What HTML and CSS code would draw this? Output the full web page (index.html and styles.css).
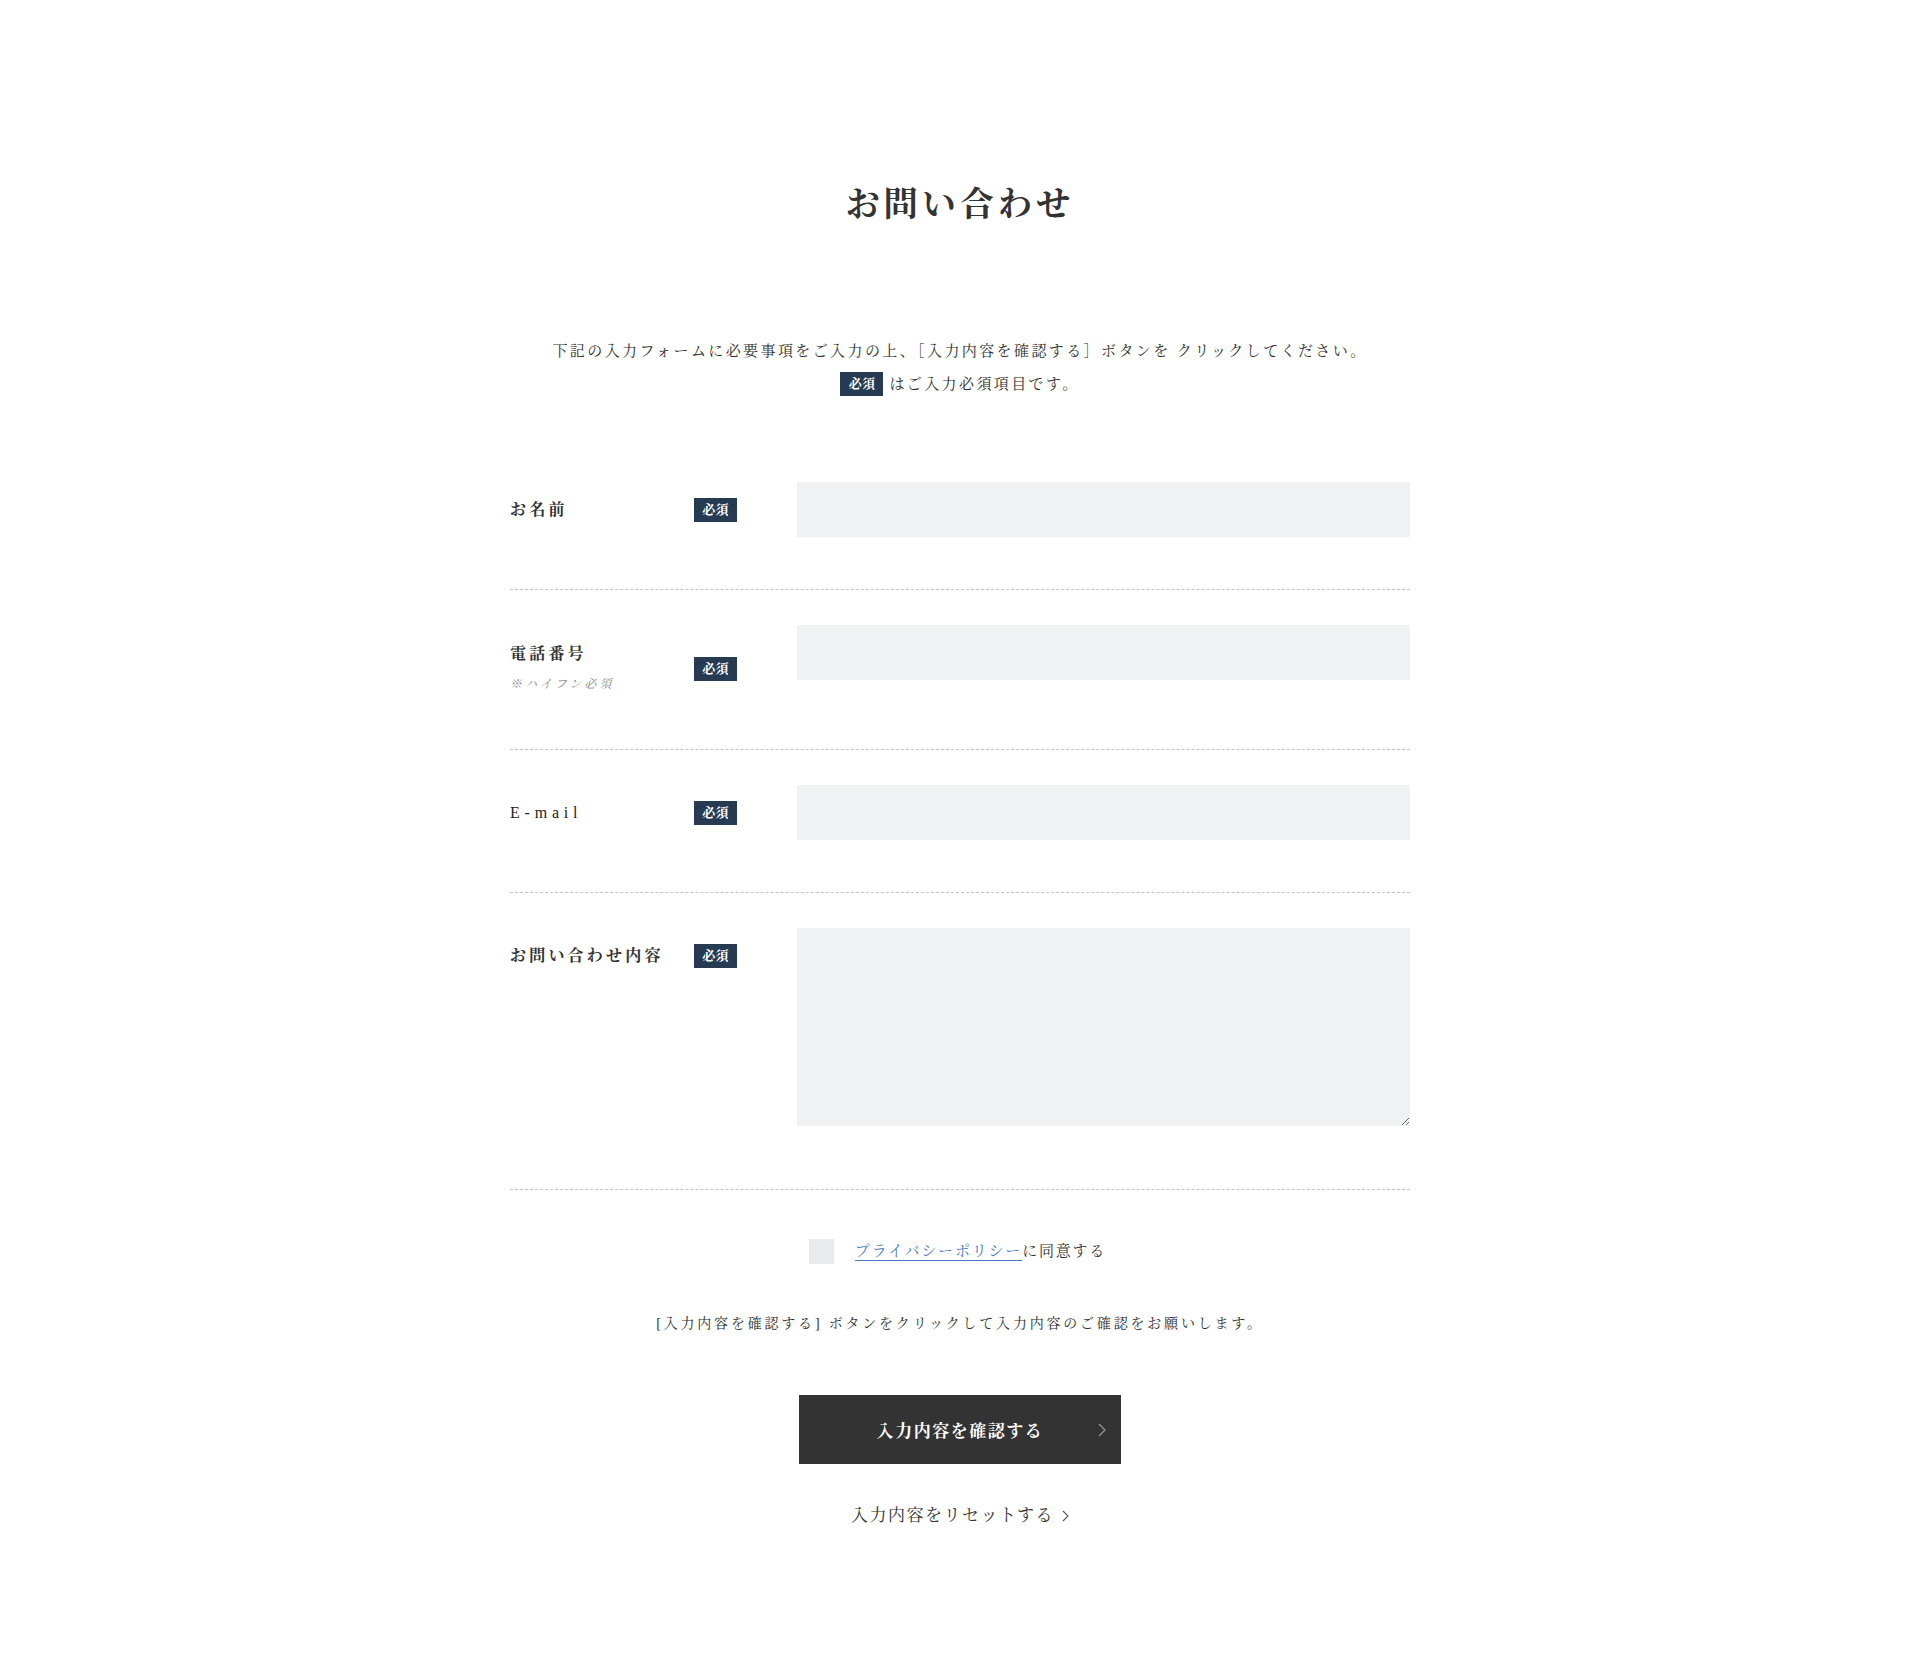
FILE: index.html
```html
<!DOCTYPE html>
<html lang="ja">
<head>
<meta charset="utf-8">
<title>お問い合わせ</title>
<link rel="stylesheet" href="styles.css">
</head>
<body>
<main class="page">
  <h1 class="title">お問い合わせ</h1>
  <p class="intro">下記の入力フォームに必要事項をご入力の上、［入力内容を確認する］ボタンを クリックしてください。<br><span class="badge badge-inline">必須</span>はご入力必須項目です。</p>

  <form class="form">
    <div class="row">
      <div class="label-col">
        <div class="label-block"><div class="label">お名前</div></div>
        <span class="badge">必須</span>
      </div>
      <div class="field"><input class="input" type="text"></div>
    </div>
    <div class="row">
      <div class="label-col label-col-tall">
        <div class="label-block label-block-top">
          <div class="label">電話番号</div>
          <div class="sub">※ハイフン必須</div>
        </div>
        <span class="badge">必須</span>
      </div>
      <div class="field"><input class="input" type="tel"></div>
    </div>
    <div class="row">
      <div class="label-col">
        <div class="label-block"><div class="label label-latin">E-mail</div></div>
        <span class="badge">必須</span>
      </div>
      <div class="field"><input class="input" type="email"></div>
    </div>
    <div class="row">
      <div class="label-col">
        <div class="label-block"><div class="label">お問い合わせ内容</div></div>
        <span class="badge">必須</span>
      </div>
      <div class="field"><textarea class="textarea"></textarea></div>
    </div>
  </form>

  <div class="agree">
    <span class="checkbox"></span>
    <span class="agree-text"><a class="link" href="#">プライバシーポリシー</a>に同意する</span>
  </div>

  <p class="note">[入力内容を確認する] ボタンをクリックして入力内容のご確認をお願いします。</p>

  <button class="submit" type="button">入力内容を確認する<svg class="submit-arrow" width="8" height="14" viewBox="0 0 8 14"><polyline points="1,1 7,7 1,13" fill="none" stroke="#9a9a9a" stroke-width="1.2"/></svg></button>

  <div class="reset-wrap">
    <a class="reset" href="#">入力内容をリセットする<svg class="reset-arrow" width="7" height="12" viewBox="0 0 7 12"><polyline points="1,1 6,6 1,11" fill="none" stroke="#555" stroke-width="1.1"/></svg></a>
  </div>
</main>
</body>
</html>
```

FILE: styles.css
```css
* {
  box-sizing: border-box;
}

html, body {
  margin: 0;
  padding: 0;
  background: #fff;
}

body {
  font-family: "Liberation Serif", "Noto Serif CJK JP", "Noto Sans CJK JP", serif;
  color: #333;
}

.page {
  padding: 180px 0 134px;
}

.title {
  margin: 0;
  text-align: center;
  font-size: 34px;
  line-height: 50px;
  font-weight: bold;
  letter-spacing: 0.12em;
  color: #333;
}

.intro {
  margin: 105px 0 0;
  text-align: center;
  font-size: 15px;
  line-height: 33px;
  letter-spacing: 0.16em;
  color: #2e2e2e;
}

.badge {
  display: inline-block;
  width: 43px;
  height: 24px;
  line-height: 24px;
  background: #263a52;
  color: #fff;
  font-size: 13px;
  font-weight: bold;
  text-align: center;
  letter-spacing: 0.02em;
  flex-shrink: 0;
}

.badge-inline {
  vertical-align: middle;
  margin-right: 6px;
  position: relative;
  top: -2px;
}

.form {
  width: 900px;
  margin: 46px auto 0;
}

.row {
  display: grid;
  grid-template-columns: 227px 613px;
  column-gap: 60px;
  padding: 35px 0 36px;
  border-bottom: 1px dashed #c4c4c4;
}

.label-col {
  display: flex;
  align-items: center;
  justify-content: space-between;
  height: 55px;
}

.label-col-tall {
  height: 88px;
}

.label-block-top {
  align-self: flex-start;
  padding-top: 16px;
}

.label {
  font-size: 16px;
  line-height: 26px;
  font-weight: bold;
  letter-spacing: 0.2em;
  color: #333;
}

.label-latin {
  letter-spacing: 0.3em;
  font-weight: normal;
  color: #222;
}

.sub {
  margin-top: 7px;
  font-size: 12px;
  line-height: 20px;
  font-style: italic;
  letter-spacing: 0.25em;
  color: #8a8a8a;
}

.field {
  display: flex;
  flex-direction: column;
}

.input {
  display: block;
  width: 100%;
  height: 55px;
  margin: 0 0 16px;
  border: none;
  background: #f0f1f3;
  padding: 0 16px;
  font-family: inherit;
  font-size: 15px;
  outline: none;
}

.textarea {
  display: block;
  width: 100%;
  height: 198px;
  margin: 0 0 27px;
  border: none;
  background: #f0f1f3;
  padding: 12px 16px;
  font-family: inherit;
  font-size: 15px;
  resize: vertical;
  outline: none;
}

.agree {
  margin-top: 49px;
  display: flex;
  justify-content: center;
  align-items: center;
  gap: 21px;
  height: 25px;
}

.checkbox {
  display: block;
  width: 25px;
  height: 25px;
  background: #e9eaec;
}

.agree-text {
  font-size: 15px;
  line-height: 25px;
  letter-spacing: 0.12em;
  color: #333;
  margin-right: 5px;
}

.link {
  color: #4a78c4;
  text-decoration: none;
  border-bottom: 1px solid #4a78c4;
  padding-bottom: 1px;
}

.note {
  margin: 48px 0 0;
  text-align: center;
  font-size: 14px;
  line-height: 24px;
  letter-spacing: 0.2em;
  color: #2e2e2e;
}

.submit {
  position: relative;
  display: block;
  width: 322px;
  height: 69px;
  margin: 59px auto 0;
  border: none;
  background: #333;
  color: #fff;
  font-family: inherit;
  font-size: 17px;
  font-weight: bold;
  letter-spacing: 0.09em;
  padding: 0;
  cursor: pointer;
}

.submit-arrow {
  position: absolute;
  right: 15px;
  top: 28px;
}

.reset-wrap {
  margin-top: 37px;
  text-align: center;
  line-height: 30px;
}

.reset {
  display: inline-flex;
  align-items: center;
  gap: 8px;
  font-size: 17px;
  letter-spacing: 0.09em;
  color: #333;
  text-decoration: none;
}
```
